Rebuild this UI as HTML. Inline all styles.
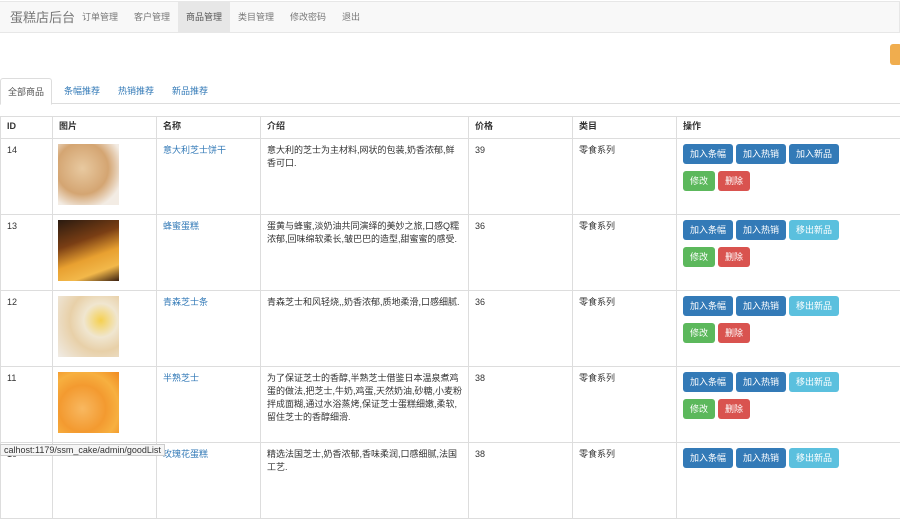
<!DOCTYPE html>
<html><head><meta charset="utf-8"><style>
*{margin:0;padding:0;box-sizing:border-box}
body{width:900px;height:455px;overflow:hidden;background:#fff;font-family:"Liberation Sans","Noto Sans CJK SC",sans-serif;font-size:9px;color:#333;position:relative}
.nav{position:absolute;left:0;top:1px;width:900px;height:32px;background:#f8f8f8;border:1px solid #e7e7e7;border-left:none}
.nav span{position:absolute;top:0;line-height:31px;color:#777}
.brand{font-size:13px;left:10px}
.act{background:#e7e7e7;color:#555!important;padding:0 8px}
.orange{position:absolute;left:890px;top:44px;width:12px;height:21px;background:#f0ad4e;border-radius:3px}
.tabs{position:absolute;top:78px;left:0;width:900px;height:26px;border-bottom:1px solid #ddd}
.tabs span{position:absolute;top:0;line-height:26px;color:#337ab7}
.tabs .on{left:0;width:52px;border:1px solid #ddd;border-bottom-color:#fff;background:#fff;color:#555;text-align:center;height:27px;border-radius:3px 3px 0 0}
table{position:absolute;top:116px;left:0;border-collapse:collapse;width:905px}
td,th{border:1px solid #ddd;vertical-align:top;text-align:left;padding:5px 6px;line-height:13px}
th{height:22px;padding:3px 6px;font-weight:bold;border-bottom:1px solid #ddd}
tr.r td{height:76px}
a{color:#337ab7;text-decoration:none}
.img{width:61px;height:61px;margin-left:-1px}
.b{display:inline-block;height:20px;line-height:20px;color:#fff;border-radius:3px;padding:0 7px;margin:0 0 7px 0;margin-right:3px}
.p{background:#337ab7}.i{background:#5bc0de}.s{background:#5cb85c}.d{background:#d9534f}
.st{position:absolute;left:0;top:444px;background:#f5f5f5;border:1px solid #ccc;color:#333;padding:0 3px;font-size:9px;line-height:11px;height:12px}
</style></head><body>
<div class="nav"><span class="brand">蛋糕店后台</span><span style="left:82px">订单管理</span><span style="left:134px">客户管理</span><span class="act" style="left:178px">商品管理</span><span style="left:238px">类目管理</span><span style="left:290px">修改密码</span><span style="left:342px">退出</span></div>
<div class="orange"></div>
<div class="tabs"><span class="on">全部商品</span><span style="left:64px">条幅推荐</span><span style="left:118px">热销推荐</span><span style="left:172px">新品推荐</span></div>
<table>
<tr><th style="width:52px">ID</th><th style="width:104px">图片</th><th style="width:104px">名称</th><th style="width:208px">介绍</th><th style="width:104px">价格</th><th style="width:104px">类目</th><th>操作</th></tr>
<tr class="r"><td>14</td><td><div class="img" style="background:radial-gradient(circle at 40% 40%,#e8c9a0,#d4a572 50%,#f3ece4 80%)"></div></td><td><a>意大利芝士饼干</a></td><td>意大利的芝士为主材料,网状的包装,奶香浓郁,鲜香可口.</td><td>39</td><td>零食系列</td><td><span class="b p">加入条幅</span><span class="b p">加入热销</span><span class="b p">加入新品</span><br><span class="b s">修改</span><span class="b d">删除</span></td></tr>
<tr class="r"><td>13</td><td><div class="img" style="background:linear-gradient(160deg,#2a1a10 0%,#7a3e14 35%,#e8a030 60%,#f2b84a 80%,#3a2010)"></div></td><td><a>蜂蜜蛋糕</a></td><td>蛋黄与蜂蜜,淡奶油共同演绎的美妙之旅,口感Q糯浓郁,回味绵软柔长,皱巴巴的造型,甜蜜蜜的感受.</td><td>36</td><td>零食系列</td><td><span class="b p">加入条幅</span><span class="b p">加入热销</span><span class="b i">移出新品</span><br><span class="b s">修改</span><span class="b d">删除</span></td></tr>
<tr class="r"><td>12</td><td><div class="img" style="background:radial-gradient(circle at 70% 40%,#f5d050,#f0e6d0 30%,#e8d0a8 55%,#f0ece6)"></div></td><td><a>青森芝士条</a></td><td>青森芝士和风轻烧,,奶香浓郁,质地柔滑,口感细腻.</td><td>36</td><td>零食系列</td><td><span class="b p">加入条幅</span><span class="b p">加入热销</span><span class="b i">移出新品</span><br><span class="b s">修改</span><span class="b d">删除</span></td></tr>
<tr class="r"><td>11</td><td><div class="img" style="background:radial-gradient(circle at 40% 60%,#f8b860,#f39a30 45%,#f7b040 70%,#f08a20)"></div></td><td><a>半熟芝士</a></td><td>为了保证芝士的香醇,半熟芝士借鉴日本温泉煮鸡蛋的做法,把芝士,牛奶,鸡蛋,天然奶油,砂糖,小麦粉拌成面糊,通过水浴蒸烤,保证芝士蛋糕细嫩,柔软,留住芝士的香醇细滑.</td><td>38</td><td>零食系列</td><td><span class="b p">加入条幅</span><span class="b p">加入热销</span><span class="b i">移出新品</span><br><span class="b s">修改</span><span class="b d">删除</span></td></tr>
<tr class="r"><td>10</td><td></td><td><a>玫瑰花蛋糕</a></td><td>精选法国芝士,奶香浓郁,香味柔润,口感细腻,法国工艺.</td><td>38</td><td>零食系列</td><td><span class="b p">加入条幅</span><span class="b p">加入热销</span><span class="b i">移出新品</span></td></tr>
</table>
<div class="st">calhost:1179/ssm_cake/admin/goodList</div>
</body></html>
